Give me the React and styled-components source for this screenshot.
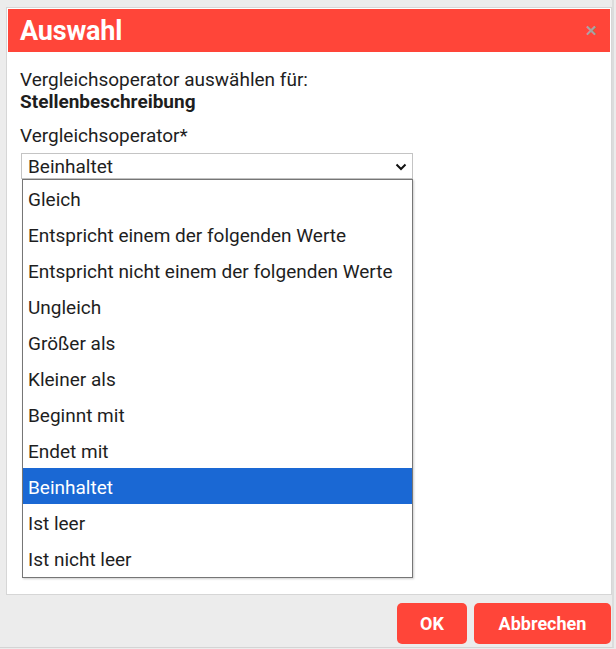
import React, { useState } from 'react';
import styled, { createGlobalStyle } from 'styled-components';

const GlobalStyle = createGlobalStyle`
  html, body {
    margin: 0;
    padding: 0;
    background: #ececec;
  }
  body {
    font-family: Roboto, "Liberation Sans", sans-serif;
    color: #1e1e1e;
  }
`;

const options = [
  'Gleich',
  'Entspricht einem der folgenden Werte',
  'Entspricht nicht einem der folgenden Werte',
  'Ungleich',
  'Größer als',
  'Kleiner als',
  'Beginnt mit',
  'Endet mit',
  'Beinhaltet',
  'Ist leer',
  'Ist nicht leer'
];

const Screen = styled.div`
  width: 614px;
  height: 648px;
  border-right: 2px solid #dcdcdc;
  border-bottom: 1px solid #d4d4d4;
  padding: 7px 0 0 6px;
  box-sizing: border-box;
  display: flex;
  flex-direction: column;
`;

const Dialog = styled.div`
  background: white;
  border: 1px solid #d6d6d6;
  padding: 1px;
  height: 588px;
  box-sizing: border-box;
  display: flex;
  flex-direction: column;
`;

const Header = styled.div`
  background: #ff4539;
  height: 43px;
  display: flex;
  align-items: center;
  justify-content: space-between;
  padding: 0 12px 0 12px;
  h1 {
    margin: 0;
    color: white;
    font-size: 27px;
    font-weight: bold;
    letter-spacing: -0.2px;
  }
`;

const Close = styled.span`
  color: #a3a3a3;
  font-size: 15px;
  font-weight: bold;
  line-height: 1;
  margin-top: 2px;
  cursor: pointer;
`;

const Body = styled.div`
  padding: 17px 12px 0 12px;
  font-size: 19px;
  line-height: 22px;
  p {
    margin: 0;
  }
  strong {
    font-weight: bold;
  }
`;

const Label = styled.div`
  margin-top: 12px;
  margin-bottom: 6px;
`;

const Field = styled.div`
  width: 392px;
  margin-left: 1px;
`;

const Select = styled.div`
  height: 26px;
  border: 1px solid #c4c4c4;
  box-sizing: border-box;
  display: flex;
  align-items: center;
  justify-content: space-between;
  padding: 1px 5px 0 6px;
  background: white;
  svg {
    display: block;
  }
`;

const List = styled.ul`
  list-style: none;
  margin: 0 0 0 1px;
  padding: 0 0 1px 0;
  border: 1px solid #767676;
  box-shadow: 1px 1px 2px rgba(0, 0, 0, 0.2);
  background: white;
`;

const Item = styled.li`
  height: 36px;
  box-sizing: border-box;
  display: flex;
  align-items: center;
  padding: 3px 5px 0 5px;
  white-space: nowrap;
  background: ${p => (p.$active ? '#1a68d4' : 'white')};
  color: ${p => (p.$active ? 'white' : '#1e1e1e')};
`;

const Footer = styled.div`
  display: flex;
  justify-content: flex-end;
  gap: 7px;
  padding-top: 8px;
  padding-right: 1px;
`;

const Button = styled.button`
  background: #ff4539;
  color: white;
  border: none;
  border-radius: 5px;
  height: 41px;
  min-width: ${p => p.$w}px;
  font-family: Roboto, "Liberation Sans", sans-serif;
  font-size: 18px;
  font-weight: bold;
  cursor: pointer;
`;

export default function App() {
  const [value, setValue] = useState('Beinhaltet');
  return (
    <Screen>
      <GlobalStyle />
      <Dialog>
        <Header>
          <h1>Auswahl</h1>
          <Close>✕</Close>
        </Header>
        <Body>
          <p>Vergleichsoperator auswählen für:</p>
          <p><strong>Stellenbeschreibung</strong></p>
          <Label>Vergleichsoperator*</Label>
          <Field>
            <Select>
              <span>{value}</span>
              <svg width="12" height="8" viewBox="0 0 12 8">
                <path d="M1.5 1.5 L6 6 L10.5 1.5" fill="none" stroke="#111" strokeWidth="2" />
              </svg>
            </Select>
            <List>
              {options.map(o => (
                <Item key={o} $active={o === value} onClick={() => setValue(o)}>{o}</Item>
              ))}
            </List>
          </Field>
        </Body>
      </Dialog>
      <Footer>
        <Button $w={70}>OK</Button>
        <Button $w={137}>Abbrechen</Button>
      </Footer>
    </Screen>
  );
}
